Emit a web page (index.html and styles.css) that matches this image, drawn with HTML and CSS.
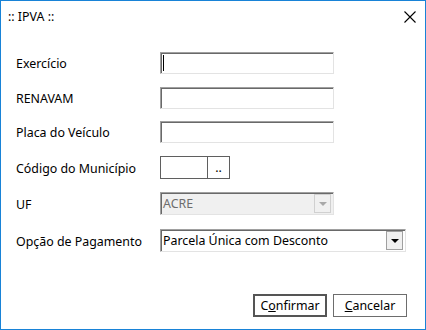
FILE: index.html
```html
<!DOCTYPE html>
<html lang="pt-BR">
<head>
    <meta charset="UTF-8">
    <title>:: IPVA ::</title>
    <link rel="stylesheet" href="styles.css">
</head>
<body>
    <div class="janela">
        <div class="titulo">
            <span>:: IPVA ::</span>
            <svg class="fechar" width="12" height="12" viewBox="0 0 12 12">
                <path d="M0.5 0.5 L11.5 11.5 M11.5 0.5 L0.5 11.5" stroke="#000" stroke-width="1.1" fill="none"/>
            </svg>
        </div>

        <div class="form">
            <div class="linha l1">
                <label>Exercício</label>
                <div class="campo"><span class="cursor"></span></div>
            </div>
            <div class="linha l2">
                <label>RENAVAM</label>
                <div class="campo"></div>
            </div>
            <div class="linha l3">
                <label>Placa do Veículo</label>
                <div class="campo"></div>
            </div>
            <div class="linha l4">
                <label>Código do Município</label>
                <div class="codigo">
                    <div class="codigo-txt"></div>
                    <div class="codigo-btn">..</div>
                </div>
            </div>
            <div class="linha l5">
                <label>UF</label>
                <div class="combo desab">
                    <span class="combo-txt">ACRE</span>
                    <span class="combo-seta"><i></i></span>
                </div>
            </div>
            <div class="linha l6">
                <label>Opção de Pagamento</label>
                <div class="combo largo">
                    <span class="combo-txt">Parcela Única com Desconto</span>
                    <span class="combo-seta"><i></i></span>
                </div>
            </div>
        </div>

        <div class="botoes">
            <button class="padrao">C<u>o</u>nfirmar</button>
            <button><u>C</u>ancelar</button>
        </div>
    </div>
</body>
</html>
```

FILE: styles.css
```css
body {
    margin: 0;
    font-family: "Noto Sans", "Open Sans", sans-serif;
    font-size: 12.4px;
    color: #000;
    background: #fff;
}
.janela {
    width: 424px;
    height: 328px;
    border: 1px solid #1883d7;
    background: #fff;
    display: flex;
    flex-direction: column;
}
.titulo {
    height: 31px;
    display: flex;
    align-items: center;
    justify-content: space-between;
    padding: 0 9px 0 7px;
}
.fechar {
    display: block;
}
.form {
    padding: 19px 0 0 15px;
    display: flex;
    flex-direction: column;
}
.linha {
    display: flex;
    align-items: center;
    height: 23px;
}
.l2 { margin-top: 12px; }
.l3 { margin-top: 11px; }
.l4 { margin-top: 13px; }
.l5 { margin-top: 13px; }
.l6 { margin-top: 14px; }
.linha label {
    width: 144px;
    padding-top: 2px;
}
.campo {
    width: 172px;
    height: 20px;
    border-top: 1px solid #a0a0a0;
    border-left: 1px solid #a0a0a0;
    border-right: 1px solid #e3e3e3;
    border-bottom: 1px solid #e3e3e3;
    box-shadow: inset 1px 1px 0 #696969;
    position: relative;
}
.cursor {
    position: absolute;
    left: 2px;
    top: 2px;
    width: 1px;
    height: 16px;
    background: #000;
}
.codigo {
    display: flex;
    width: 68px;
    height: 21px;
    border: 1px solid #5f5f5f;
}
.codigo-txt {
    width: 46px;
    border-right: 1px solid #5f5f5f;
}
.codigo-btn {
    flex: 1;
    text-align: center;
    line-height: 21px;
}
.combo {
    width: 170px;
    height: 21px;
    border-top: 1px solid #a0a0a0;
    border-left: 1px solid #a0a0a0;
    border-right: 1px solid #e3e3e3;
    border-bottom: 1px solid #e3e3e3;
    box-shadow: inset 1px 1px 0 #696969;
    display: flex;
    align-items: center;
    justify-content: space-between;
    padding-left: 2px;
}
.combo.largo {
    width: 242px;
}
.combo.desab {
    background: #f0f0f0;
    color: #6d6d6d;
}
.combo-seta {
    width: 15px;
    height: 17px;
    margin-right: 2px;
    border: 1px solid #a0a0a0;
    background: #f0f0f0;
    display: flex;
    align-items: center;
    justify-content: center;
}
.combo-seta i {
    width: 0;
    height: 0;
    border-left: 4px solid transparent;
    border-right: 4px solid transparent;
    border-top: 4px solid #000;
}
.desab .combo-seta {
    border-color: #d0d0d0;
}
.desab .combo-seta i {
    border-top-color: #a8a8a8;
}
.botoes {
    margin-top: auto;
    display: flex;
    justify-content: flex-end;
    gap: 6px;
    padding: 0 18px 12px 0;
}
button {
    font-family: inherit;
    font-size: 12.4px;
    width: 74px;
    height: 23px;
    background: #fff;
    border: 1px solid #6d6d6d;
    padding: 0;
    color: #000;
}
button.padrao {
    border: 2px solid #555;
}
```
